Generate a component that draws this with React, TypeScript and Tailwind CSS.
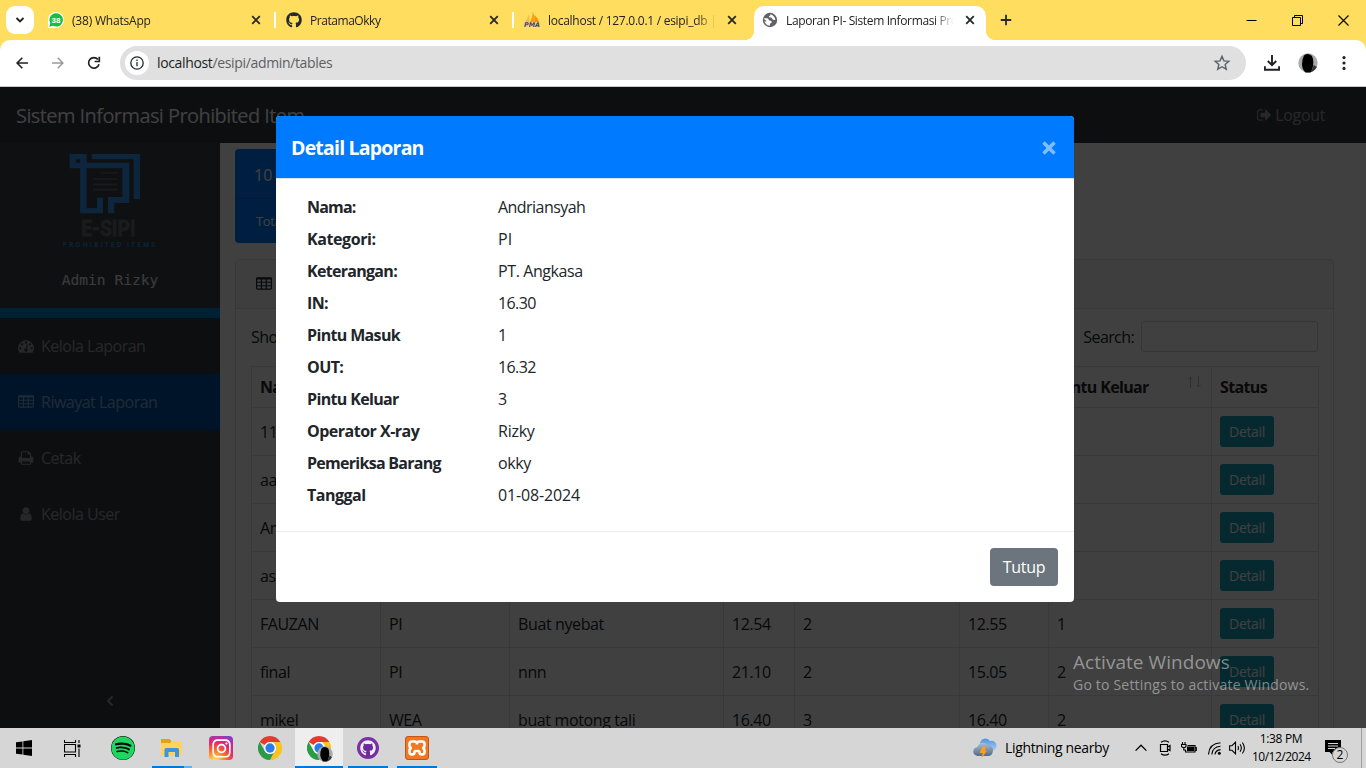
import React from "react";
import { FaGithub, FaSpotify, FaInstagram } from "react-icons/fa";

const P = {
  dash: "M384 1152q0-53-37.5-90.5t-90.5-37.5-90.5 37.5-37.5 90.5 37.5 90.5 90.5 37.5 90.5-37.5 37.5-90.5zm192-448q0-53-37.5-90.5t-90.5-37.5-90.5 37.5-37.5 90.5 37.5 90.5 90.5 37.5 90.5-37.5 37.5-90.5zm428 481l101-382q6-26-7.5-48.5t-38.5-29.5-48 6.5-30 39.5l-101 382q-60 5-107 43.5t-63 98.5q-20 77 20 146t117 89 146-20 89-117q16-60-6-117t-72-91zm660-33q0-53-37.5-90.5t-90.5-37.5-90.5 37.5-37.5 90.5 37.5 90.5 90.5 37.5 90.5-37.5 37.5-90.5zm-640-640q0-53-37.5-90.5t-90.5-37.5-90.5 37.5-37.5 90.5 37.5 90.5 90.5 37.5 90.5-37.5 37.5-90.5zm448 192q0-53-37.5-90.5t-90.5-37.5-90.5 37.5-37.5 90.5 37.5 90.5 90.5 37.5 90.5-37.5 37.5-90.5zm320 448q0 261-141 483-19 29-54 29h-1402q-35 0-54-29-141-221-141-483 0-182 71-348t191-286 286-191 348-71 348 71 286 191 191 286 71 348z",
  table:
    "M160 128h1472q66 0 113 47t47 113v1088q0 66-47 113t-113 47h-1472q-66 0-113-47t-47-113v-1088q0-66 47-113t113-47zM128 384v256h416v-256zM672 384v256h416v-256zM1216 384v256h448v-256zM128 768v256h416v-256zM672 768v256h416v-256zM1216 768v256h448v-256zM128 1152v256h416v-256zM672 1152v256h416v-256zM1216 1152v256h448v-256z",
  print: "M448 1536h896v-256h-896v256zm0-640h896v-384h-160q-40 0-68-28t-28-68v-160h-640v640zm1280 64v416q0 13-9.5 22.5t-22.5 9.5h-224v160q0 40-28 68t-68 28h-960q-40 0-68-28t-28-68v-160h-224q-13 0-22.5-9.5t-9.5-22.5v-416q0-79 56.5-135.5t135.5-56.5h64v-544q0-40 28-68t68-28h672q40 0 88 20t76 48l152 152q28 28 48 76t20 88v256h64q79 0 135.5 56.5t56.5 135.5z",
  user: "M1280 1399q0 109-62.5 187t-150.5 78h-854q-88 0-150.5-78t-62.5-187q0-85 8.5-160.5t31.5-152 58.5-131 94-89 134.5-34.5q131 128 313 128t313-128q76 0 134.5 34.5t94 89 58.5 131 31.5 152 8.5 160.5zm-256-887q0 159-112.5 271.5t-271.5 112.5-271.5-112.5-112.5-271.5 112.5-271.5 271.5-112.5 271.5 112.5 112.5 271.5z",
  out: "M640 1440q0 4 1 20t.5 26.5-3 23.5-10 19.5-20.5 6.5h-320q-119 0-203.5-84.5t-84.5-203.5v-704q0-119 84.5-203.5t203.5-84.5h320q13 0 22.5 9.5t9.5 22.5q0 4 1 20t.5 26.5-3 23.5-10 19.5-20.5 6.5h-320q-66 0-113 47t-47 113v704q0 66 47 113t113 47h312l11.5 1 11.5 3 8 5.5 7 9 2 13.5zm928-544q0 26-19 45l-544 544q-19 19-45 19t-45-19-19-45v-288h-448q-26 0-45-19t-19-45v-384q0-26 19-45t45-19h448v-288q0-26 19-45t45-19 45 19l544 544q19 19 19 45z",
};

function Glyph({ d, vb = "0 0 1792 1792", className = "" }: { d: string; vb?: string; className?: string }) {
  return (
    <svg viewBox={vb} className={`shrink-0 ${className}`} fill="currentColor" fillRule="evenodd">
      <path d={d} />
    </svg>
  );
}

function Close() {
  return (
    <svg viewBox="0 0 10 10" className="size-[10px] shrink-0" stroke="#26282b" strokeWidth="1.8">
      <path d="M1.2 1.2l7.6 7.6M8.8 1.2L1.2 8.8" />
    </svg>
  );
}

function Tab({ icon, title, tight = "", active = false, sep = false }: { icon: React.ReactNode; title: string; tight?: string; active?: boolean; sep?: boolean }) {
  return (
    <div className="relative flex h-10 w-[238px] shrink-0 items-center">
      {active && (
        <>
          <div className="absolute top-1.5 right-[4px] bottom-0 left-[2px] rounded-t-[10px] bg-white" />
          <div className="absolute bottom-0 -left-2 size-[10px] bg-[radial-gradient(circle_at_0_0,transparent_10px,white_10.5px)]" />
          <div className="absolute right-[-6px] bottom-0 size-[10px] bg-[radial-gradient(circle_at_100%_0,transparent_10px,white_10.5px)]" />
        </>
      )}
      <div className="relative flex w-full items-center pr-[15px] pl-[10px]">
        <span className="flex size-4 shrink-0 items-center justify-center">{icon}</span>
        <span className={`relative top-px ml-2 w-[168px] overflow-hidden mask-[linear-gradient(90deg,#000_88%,transparent)] text-xs leading-4 whitespace-nowrap text-[#222] ${tight}`}>{title}</span>
        <span className="ml-auto flex"><Close /></span>
      </div>
      {sep && <div className="absolute top-3 right-0 h-4 w-[2px] bg-white" />}
    </div>
  );
}

function WaIcon() {
  return (
    <svg viewBox="0 0 16 16" className="size-4">
      <path d="M0 16V8a8 8 0 1 1 8 8z" fill="#fff" />
      <path d="M1.3 14.7l1-3.6A6.7 6.7 0 1 1 5 13.8z" fill="#12c143" />
      <text x="8" y="10.8" fontSize="8" fontWeight="700" fill="#fff" textAnchor="middle" fontFamily="Liberation Sans, sans-serif">38</text>
    </svg>
  );
}

function PmaIcon() {
  return (
    <svg viewBox="0 0 16 16" className="size-4">
      <path d="M1 10Q4 7 4.500 2Q6 6 5 10z" fill="#fbb45b" />
      <path d="M5.500 10Q9 6 8.500 0Q11.500 5 10 10z" fill="#f89c0e" />
      <path d="M10.500 10V3Q14 6 15 10z" fill="#f79008" />
      <text x="8" y="15" fontSize="6.500" fontWeight="700" fontStyle="italic" fill="#3d3d8a" textAnchor="middle" textLength="16" lengthAdjust="spacingAndGlyphs" fontFamily="DejaVu Sans, sans-serif">PMA</text>
    </svg>
  );
}

function GlobeIcon() {
  return (
    <svg viewBox="0 0 16 16" className="size-4">
      <circle cx="8" cy="8" r="7.200" fill="#5f6368" />
      <path d="M2.300 6.200h3q1.300.2 1.400 1.500.2 1.100 1.900 1.100 1.300.2 1.200 1.300-.1 1.200-1.600 1.300-.4.200-.4 2.300Q3.800 13 2.400 9.400l1.800.1V8.400L2 7.300zM8.600 2.300q0 1.500-1.500 1.700-.5.300 0 1 .5.600 2.100.5.800.2.900 1.200.3 1.200 3.200 1.300-.1-3.700-4.700-5.700z" fill="#fff" />
    </svg>
  );
}

function Avatar({ className = "" }: { className?: string }) {
  return (
    <svg viewBox="0 0 20 20" className={className}>
      <circle cx="10" cy="10" r="9.700" fill="#a7abb0" />
      <path d="M6 2.500Q10-.5 14 3q2 4 1 10-1 5-2.500 6.500h-5Q4 16 4 11T6 2.500z" fill="#000" />
      <path d="M12.500 19.300q4.500-1.500 6.300-5.300l-3-2z" fill="#34373a" />
    </svg>
  );
}

function ChromeLogo({ className = "" }: { className?: string }) {
  return (
    <svg viewBox="0 0 48 48" className={className}>
      <path d="M24 0a24 24 0 0 1 20.800 12H24a12 12 0 0 0-10.400 6L3.200 12A24 24 0 0 1 24 0z" fill="#e33b2e" />
      <path d="M44.800 12a24 24 0 0 1-20.800 36l10.400-18A12 12 0 0 0 34.400 18L31 12z" fill="#fcc31e" />
      <path d="M3.200 12l10.400 18A12 12 0 0 0 24 36a12 12 0 0 0 8-3L24 48A24 24 0 0 1 3.200 12z" fill="#2a9c48" />
      <circle cx="24" cy="24" r="12" fill="#fff" />
      <circle cx="24" cy="24" r="9.300" fill="#2a7de9" />
    </svg>
  );
}

function Logo() {
  return (
    <svg viewBox="186 40 282 286" className="mr-[2px] h-[95.3px] w-[94px]">
      <g fill="#3494f4">
        <path fillRule="evenodd" d="M209 43h51v26h128v121h-45v31h-19v-49h43V86H260v120h31v-32h18v47h-69V86h-31zM228 59v10h12V59z" />
        <path d="M275 43h145v135h-19V59H275z" />
      </g>
      <path d="M302 100h50M279 118h73M279 134h73M279 150h73" stroke="#65686b" strokeWidth="5" />
      <text x="244" y="290" fontSize="67" fontWeight="700" fill="#686b6e" stroke="#686b6e" strokeWidth="2.500" textLength="163" lengthAdjust="spacingAndGlyphs" fontFamily="Roboto, sans-serif">E-SIPI</text>
      <text x="188" y="321" fontSize="20" fontWeight="700" fill="#3187d8" textLength="277" fontFamily="Open Sans, sans-serif">PROHIBITED ITEMS</text>
    </svg>
  );
}

const menu = [
  { d: P.dash, t: "Kelola Laporan", vb: "0 0 1792 1792" },
  { d: P.table, t: "Riwayat Laporan", vb: "0 0 1792 1792", on: true },
  { d: P.print, t: "Cetak", vb: "0 0 1792 1792" },
  { d: P.user, t: "Kelola User", vb: "-256 0 1792 1792" },
];

const heads = ["Nama", "Kategori", "Keterangan", "IN", "Pintu Masuk", "OUT", "Pintu Keluar", "Status"];
const rows = [
  ["11", "PI", "", "", "", "", ""],
  ["aa", "PI", "", "", "", "", ""],
  ["Andriansyah", "PI", "PT. Angkasa", "16.30", "1", "16.32", ""],
  ["as", "PI", "", "", "", "", ""],
  ["FAUZAN", "PI", "Buat nyebat", "12.54", "2", "12.55", "1"],
  ["final", "PI", "nnn", "21.10", "2", "15.05", "2"],
  ["mikel", "WEA", "buat motong tali", "16.40", "3", "16.40", "2"],
];

const details = [
  ["Nama:", "Andriansyah", "tracking-[-0.8px]", "tracking-[-0.55px]"],
  ["Kategori:", "PI", "tracking-[-0.4px]", ""],
  ["Keterangan:", "PT. Angkasa", "tracking-[-0.7px]", "tracking-[-0.4px]"],
  ["IN:", "16.30", "tracking-[-0.6px]", "tracking-[-0.6px]"],
  ["Pintu Masuk", "1", "tracking-[-0.65px]", ""],
  ["OUT:", "16.32", "tracking-[-0.6px]", "tracking-[-0.6px]"],
  ["Pintu Keluar", "3", "tracking-[-0.65px]", ""],
  ["Operator X-ray", "Rizky", "tracking-[-0.5px]", "tracking-[-0.25px]"],
  ["Pemeriksa Barang", "okky", "tracking-[-0.72px]", "tracking-[-0.4px]"],
  ["Tanggal", "01-08-2024", "tracking-[-0.5px]", "tracking-[-0.15px]"],
];

const cols = "grid grid-cols-[129px_129px_214px_71px_165px_89px_163px_107px]";

function BrowserBar() {
  return (
    <header className="shrink-0 bg-[#ffdd5e]">
      <div className="flex h-10 items-center">
        <div className="ml-1.5 flex size-7 items-center justify-center rounded-[9px] bg-white">
          <svg viewBox="0 0 10 10" className="size-[10px]" fill="none" stroke="#202124" strokeWidth="1.800"><path d="M1.500 3L5 6.500 8.500 3" /></svg>
        </div>
        <div className="ml-1 flex">
          <Tab icon={<WaIcon />} title="(38) WhatsApp" tight="tracking-[-0.2px]" sep />
          <Tab icon={<FaGithub className="size-4 text-[#24292e]" />} title="PratamaOkky" tight="tracking-[-0.45px]" sep />
          <Tab icon={<PmaIcon />} title="localhost / 127.0.0.1 / esipi_db | ph" tight="tracking-[-0.27px]" />
          <Tab icon={<GlobeIcon />} title="Laporan PI- Sistem Informasi Prohibited" tight="tracking-[-0.37px]" active />
        </div>
        <svg viewBox="0 0 12 12" className="ml-[10px] size-3" stroke="#26282b" strokeWidth="1.800"><path d="M6 .8v10.400M.8 6h10.400" /></svg>
        <div className="ml-auto flex items-center gap-[35px] pr-[17px]">
          <svg viewBox="0 0 11 11" className="size-[11px]" stroke="#000"><path d="M.5 5.500h10" /></svg>
          <svg viewBox="0 0 11 11" className="size-[11px]" fill="none" stroke="#000"><path d="M.5 2.500h8v8h-8zM2.500 2.500v-2h8v8h-2" /></svg>
          <svg viewBox="0 0 11 11" className="size-[11px]" stroke="#000" strokeWidth="1.100"><path d="M.5.5l10 10M10.500.5l-10 10" /></svg>
        </div>
      </div>
      <div className="flex h-[47px] items-center rounded-t-[10px] border-b border-[#c8c8cc] bg-white">
        <svg viewBox="0 0 12 12" className="ml-4 size-3" fill="none" stroke="#202124" strokeWidth="1.600"><path d="M12 6H1.200M6.300.8L1.100 6l5.200 5.200" /></svg>
        <svg viewBox="0 0 12 12" className="ml-6 size-3" fill="none" stroke="#9a9a9a" strokeWidth="1.500"><path d="M0 6h10.800M5.700.8L10.900 6l-5.200 5.200" /></svg>
        <svg viewBox="0 0 14 14" className="ml-[23px] size-[14px]" fill="none" stroke="#202124" strokeWidth="1.700"><path d="M12 8.300A5.300 5.300 0 1 1 11 3.500" /><path d="M12.300.8v4.700H7.600" /></svg>
        <div className="ml-[19px] flex h-[34px] w-[1126px] items-center rounded-full bg-[#e0e0e0] px-[5px]">
          <span className="flex size-6 items-center justify-center rounded-full bg-white">
            <svg viewBox="0 0 14 14" className="size-[14px]" fill="none" stroke="#26282b" strokeWidth="1.300"><circle cx="7" cy="7" r="6.200" /><path d="M7 6v4.200M7 3.600v1.500" /></svg>
          </span>
          <span className="ml-2 text-sm leading-5 tracking-[-0.35px] text-[#5c5f63]"><span className="text-[#1d1f21]">localhost</span>/esipi/admin/tables</span>
          <svg viewBox="0 0 24 24" className="mr-2.5 ml-auto size-[18px]" fill="none" stroke="#5f6368" strokeWidth="1.900"><path d="M12 3.200l2.600 6 6.500.5-4.900 4.300 1.500 6.300L12 17l-5.700 3.300L7.800 14 2.900 9.700l6.500-.5z" /></svg>
        </div>
        <svg viewBox="0 0 16 16" className="ml-[18px] size-4" fill="none" stroke="#202124" strokeWidth="1.900"><path d="M8 0v10M3.800 6L8 10.200 12.200 6M.9 11.200v3.600h14.200v-3.600" /></svg>
        <Avatar className="ml-[18px] size-5" />
        <svg viewBox="0 0 4 16" className="ml-6 h-4 w-1" fill="#202124"><circle cx="2" cy="2.600" r="1.600" /><circle cx="2" cy="8" r="1.600" /><circle cx="2" cy="13.400" r="1.600" /></svg>
      </div>
    </header>
  );
}

function Sidebar() {
  return (
    <aside className="flex w-[220px] shrink-0 flex-col bg-[#343a40] text-white/50">
      <div className="flex h-[165px] flex-col items-center bg-[#3d424a] pt-[10px]">
        <Logo />
        <p className="mt-5 font-['DejaVu_Sans_Mono',monospace] text-[14.6px] leading-6 text-white/90">Admin Rizky</p>
      </div>
      <div className="h-[10px] bg-[#0080d0]" />
      {menu.map((m) => (
        <div key={m.t} className={`flex h-14 items-center pl-[18px] ${m.on ? "bg-[#0052a5]" : ""}`}>
          <Glyph d={m.d} vb={m.vb} className="size-4" />
          <span className="ml-[7px] text-base leading-6 tracking-[-0.5px] whitespace-nowrap">{m.t}</span>
        </div>
      ))}
      <svg viewBox="0 0 8 12" className="mt-auto mb-[21px] ml-[106px] h-3 w-2" fill="none" stroke="currentColor" strokeWidth="2"><path d="M6.500 1.500L2 6l4.500 4.500" /></svg>
    </aside>
  );
}

function Content() {
  return (
    <main className="flex-1 overflow-hidden pt-1.5 pr-8 pl-[15px]">
      <div className="h-[94px] w-[255px] rounded-[4px] bg-[#007bff] text-white">
        <div className="flex h-[49px] items-center pt-[2px] pl-[19px] text-base">10 Laporan</div>
        <div className="flex h-[45px] items-center border-t border-black/10 pl-[21px] pt-px text-[13px] tracking-[-0.4px]">Total Laporan</div>
      </div>
      <div className="mt-4 rounded-t-[4px] border border-[#dfdfdf] text-[#212529]">
        <div className="flex h-[49px] items-center border-b border-[#dfdfdf] bg-[#f7f7f7] pl-5">
          <Glyph d={P.table} className="size-4" />
          <span className="ml-1.5">Riwayat Laporan</span>
        </div>
        <div className="px-[15px] pt-3">
          <div className="flex h-[31px] items-center tracking-[-0.6px]">
            <span>Show 10 entries</span>
            <span className="ml-auto">Search:</span>
            <span className="ml-[7px] h-[31px] w-[177px] rounded-[3px] border border-[#ced4da]" />
          </div>
          <div className="mt-3.5 w-[1068px] border-t border-l border-[#dee2e6]">
            <div className={`${cols} h-[41px] font-bold`}>
              {heads.map((h) => (
                <div key={h} className="relative flex items-center border-r border-b border-[#dee2e6] pl-2 tracking-[-0.65px]">
                  {h}
                  {h !== "Status" && (
                    <svg viewBox="0 0 14 12" className="absolute top-[9px] right-[9px] h-3 w-3.5 opacity-30" fill="none" stroke="#212529"><path d="M2.500 12V1M.3 3.200L2.500 1l2.200 2.200M10.500 0v11M8.300 8.800L10.500 11l2.200-2.200" /></svg>
                  )}
                </div>
              ))}
            </div>
            {rows.map((r) => (
              <div key={r[0]} className={`${cols} h-12`}>
                {r.map((c, i) => (
                  <div key={i} className={`flex items-center border-r border-b border-[#dee2e6] pl-2 ${i === 2 ? "tracking-[-0.38px]" : "tracking-[-0.4px]"}`}>{c}</div>
                ))}
                <div className="flex items-start border-r border-b border-[#dee2e6] pt-2 pl-2">
                  <span className="flex h-[31px] w-[54px] items-center justify-center rounded-[3px] bg-[#17a2b8] pt-px text-sm tracking-[-0.35px] text-white">Detail</span>
                </div>
              </div>
            ))}
          </div>
        </div>
      </div>
    </main>
  );
}

function Modal() {
  return (
    <div className="absolute inset-0 flex items-start bg-black/75 pt-[29px] pl-[276px]">
      <div className="flex h-[486px] w-[798px] flex-col rounded-[4px] bg-white text-[#212529]">
        <div className="flex h-[63px] items-center rounded-t-[4px] border-b border-[#dee2e6] bg-[#007bff] pr-[18px] pl-[15px] text-white">
          <h5 className="pt-0.5 text-[19.500px] font-bold tracking-[-0.8px]">Detail Laporan</h5>
          <svg viewBox="0 0 14 14" className="mt-px ml-auto size-[14px]" stroke="#80bdff" strokeWidth="3.600"><path d="M1.500 1.500l11 11M12.500 1.500l-11 11" /></svg>
        </div>
        <dl className="flex-1 px-[31px] pt-3">
          {details.map(([k, v, kt, vt]) => (
            <div key={k} className="flex h-8 items-center">
              <dt className={`w-[191px] font-bold ${kt}`}>{k}</dt>
              <dd className={vt}>{v}</dd>
            </div>
          ))}
        </dl>
        <div className="flex h-[71px] items-center justify-end border-t border-[#e9ecef] pr-4">
          <button className="h-[38px] w-[68px] rounded-[4px] bg-[#6c757d] text-base tracking-[-0.3px] text-white">Tutup</button>
        </div>
      </div>
    </div>
  );
}

function TaskIcon({ children, run = "", on = false }: { children: React.ReactNode; run?: string; on?: boolean }) {
  return (
    <div className={`relative flex h-10 w-12 items-center justify-center ${on ? "bg-[#eeeeee]" : ""}`}>
      {children}
      {run && <div className={`absolute bottom-0 h-[2px] bg-[#0078d7] ${run}`} />}
    </div>
  );
}

function Taskbar() {
  return (
    <footer className="flex h-10 shrink-0 items-center bg-[#d6d6d6] text-black">
      <TaskIcon>
        <svg viewBox="0 0 16 16" className="size-4"><path d="M0 2.300L6.500 1.400v6.200H0zM7.300 1.300L16 0v7.600H7.300zM0 8.400h6.500v6.200L0 13.700zM7.300 8.400H16V16l-8.700-1.300z" /></svg>
      </TaskIcon>
      <TaskIcon>
        <svg viewBox="0 0 17 17" className="size-[17px]" fill="none" stroke="#000"><path d="M.5 0v2.500h11V0M.5 4.500h11v7.500H.5zM.5 17v-2.500h11V17M15 0v3M15 8.500V17" strokeWidth="1.100" /><path d="M13.500 4.500h3v3h-3z" fill="#000" stroke="none" /></svg>
      </TaskIcon>
      <div className="ml-[3px] flex gap-[1px]">
        <TaskIcon><span className="flex size-6 rounded-full bg-black"><FaSpotify className="size-6 text-[#1ed760]" /></span></TaskIcon>
        <TaskIcon run="left-1 w-8">
          <svg viewBox="0 0 22 20" className="h-5 w-[22px]"><path d="M0 1h8.500l1.500 2H0z" fill="#e0a010" /><path d="M0 3h21v15H0z" fill="#ffd35c" /><path d="M0 2h9l1.500 1.500L9 5H0z" fill="#e3a21a" /><path d="M3.500 19v-7.500q0-1.500 1.500-1.500h11.500q1.500 0 1.500 1.500V19h-4v-5h-6.500v5z" fill="#3b96dc" /></svg>
          <div className="absolute bottom-0 left-9 h-[2px] w-2 bg-[#66aee8]" />
        </TaskIcon>
        <TaskIcon><span className="flex size-6 items-center justify-center rounded-[4px] bg-[radial-gradient(circle_at_25%_105%,#ffd34e_10%,#fa6a2c_38%,#e0286f_62%,#8a3ac8_90%)]"><FaInstagram className="size-[21px] text-white" /></span></TaskIcon>
        <TaskIcon><ChromeLogo className="size-6" /></TaskIcon>
        <TaskIcon on run="left-0 w-12">
          <ChromeLogo className="size-6" />
          <Avatar className="absolute top-[18px] left-[22px] size-4" />
        </TaskIcon>
        <TaskIcon run="left-1 w-10"><span className="flex size-[22px] items-center justify-center rounded-full bg-[#7a2fa5]"><span className="flex size-[17px] items-center justify-center rounded-full bg-[#6b2a9a]"><FaGithub className="size-4 text-[#f1eaf7]" /></span></span></TaskIcon>
        <TaskIcon run="left-1 w-10">
          <svg viewBox="0 0 24 24" className="size-6"><rect x=".5" y=".5" width="23" height="23" rx="2.500" fill="#f37623" stroke="#bb5818" /><path d="M12 8.500V8q0-2.500-2.300-2.500H7Q4.500 5.500 4.500 8v1.500Q4.500 12 7 12q-2.500 0-2.500 2.500V16q0 2.500 2.500 2.500t2.500-2.200q0-1.300 1.200-1.300h2.600q1.200 0 1.200 1.300 0 2.200 2.500 2.200t2.500-2.500v-1.500Q19.500 12 17 12q2.500 0 2.500-2.500V8q0-2.500-2.500-2.500h-2.700Q12 5.500 12 8z" fill="none" stroke="#fff" strokeWidth="2.600" /></svg>
        </TaskIcon>
      </div>
      <div className="ml-auto flex items-center">
        <svg viewBox="0 0 24 22" className="h-[22px] w-6">
          <defs>
            <linearGradient id="cloudBack" x1="0" y1="0" x2="0" y2="1"><stop offset="0" stopColor="#4a94e4" /><stop offset="1" stopColor="#b4cdea" /></linearGradient>
            <linearGradient id="cloudFront" x1="0" y1="0" x2="0" y2="1"><stop offset="0" stopColor="#a9bfd6" /><stop offset="1" stopColor="#526b85" /></linearGradient>
          </defs>
          <path d="M7 6a5.500 5.500 0 0 1 10-2 5 5 0 0 1 6.500 5q-.5 5-5 5H8z" fill="url(#cloudBack)" />
          <path d="M5 19a4.500 4.500 0 0 1-.5-9 5.500 5.500 0 0 1 10-1.500 4.500 4.500 0 0 1 5.500 5q-.5 5.500-5 5.500z" fill="url(#cloudFront)" />
          <path d="M9.500 9.500h3.500l-1.200 4H14L8.500 21.500l1.200-5.500H6.500z" fill="#ff9d1c" />
        </svg>
        <span className="ml-2 text-sm tracking-[-0.35px] whitespace-nowrap">Lightning nearby</span>
        <svg viewBox="0 0 12 8" className="ml-[26px] h-2 w-3" fill="none" stroke="#000" strokeWidth="1.300"><path d="M.6 6.600L6 1.200l5.400 5.400" /></svg>
        <svg viewBox="0 0 12 16" className="ml-3 h-4 w-3" fill="none" stroke="#000" strokeWidth="1.200"><path d="M1.500 4.500h7v7h-7zM8.500 7l2.500-1.500v5l-2.500-1.500M2 2.200Q6-.6 10 2.200M2 13.800q4 2.800 8 0" /></svg>
        <svg viewBox="0 0 16 12" className="ml-[10px] h-3 w-4" fill="none" stroke="#000" strokeWidth="1.100"><path d="M6.500 3.500h7.500v6.500H4.500V8M14 5.500h1.300v3H14" /><path d="M6.500 5h6v3.500h-6z" fill="#000" /><path d="M1.500 0v2.500M4 0v2.500M.5 2.500h4.500v1.500q0 1.500-2.200 1.500T.5 4zM2.800 5.500V8h2" /></svg>
        <svg viewBox="0 0 13 13" className="ml-[11px] size-[13px]" fill="none" stroke="#000" strokeWidth="1.100"><path d="M.5 12.500Q1 1.500 12.500.7M3.800 12.500Q4.200 5 12.500 4.200M7 12.500Q7.300 8.300 12.500 7.600" /><circle cx="11.300" cy="11.300" r="1.500" fill="#000" stroke="none" /></svg>
        <svg viewBox="0 0 17 14" className="ml-2 h-3.5 w-[17px]" fill="none" stroke="#000" strokeWidth="1.100"><path d="M.6 4.700H3L6.500 1.200v11.600L3 9.300H.6zM8.800 5q1.400 2 0 4M11 3.200q2.700 3.800 0 7.600M13.300 1.500q4.200 5.500 0 11" /></svg>
        <div className="ml-1.5 w-[58px] text-center text-xs leading-[18px] whitespace-nowrap">
          <div className="tracking-[-0.35px]">1:38 PM</div>
          <div className="tracking-[-0.5px]">10/12/2024</div>
        </div>
        <div className="relative ml-[15px] h-10 w-[26px]">
          <svg viewBox="0 0 16 15" className="absolute top-3 left-0 h-[15px] w-4"><path d="M0 0h16v12H7.500v3l-3-3H0z" /><path d="M3 3.500h10M3 6h10M3 8.500h7" stroke="#d6d6d6" /></svg>
          <span className="absolute top-[19px] left-[7px] flex size-4 items-center justify-center rounded-full border border-[#777] bg-[#d6d6d6] text-[12px] leading-none">2</span>
        </div>
        <div className="ml-[10px] h-10 w-[5px] border-l border-[#a0a0a0]" />
      </div>
    </footer>
  );
}

export default function App() {
  return (
    <div className="flex h-screen w-full flex-col overflow-hidden font-['Open_Sans','Noto_Sans',sans-serif]">
      <BrowserBar />
      <div className="relative flex min-h-0 flex-1 flex-col overflow-hidden bg-white">
        <nav className="flex h-14 shrink-0 items-center justify-between bg-[#343a40] pr-[41px] pl-4">
          <span className="pt-0.5 text-xl tracking-[-0.58px] text-white">Sistem Informasi Prohibited Item</span>
          <span className="flex items-center text-white/50">
            <Glyph d={P.out} vb="0 0 1792 1792" className="size-4" />
            <span className="ml-[2px] tracking-[-0.35px]">Logout</span>
          </span>
        </nav>
        <div className="flex min-h-0 flex-1">
          <Sidebar />
          <Content />
        </div>
        <Modal />
        <div className="absolute right-[57px] bottom-[33px] w-[236px] whitespace-nowrap text-white/45">
          <div className="text-[19px] leading-[25px] tracking-[0.05px]">Activate Windows</div>
          <div className="text-[14px] leading-5 tracking-[0.2px]">Go to Settings to activate Windows.</div>
        </div>
      </div>
      <Taskbar />
    </div>
  );
}
